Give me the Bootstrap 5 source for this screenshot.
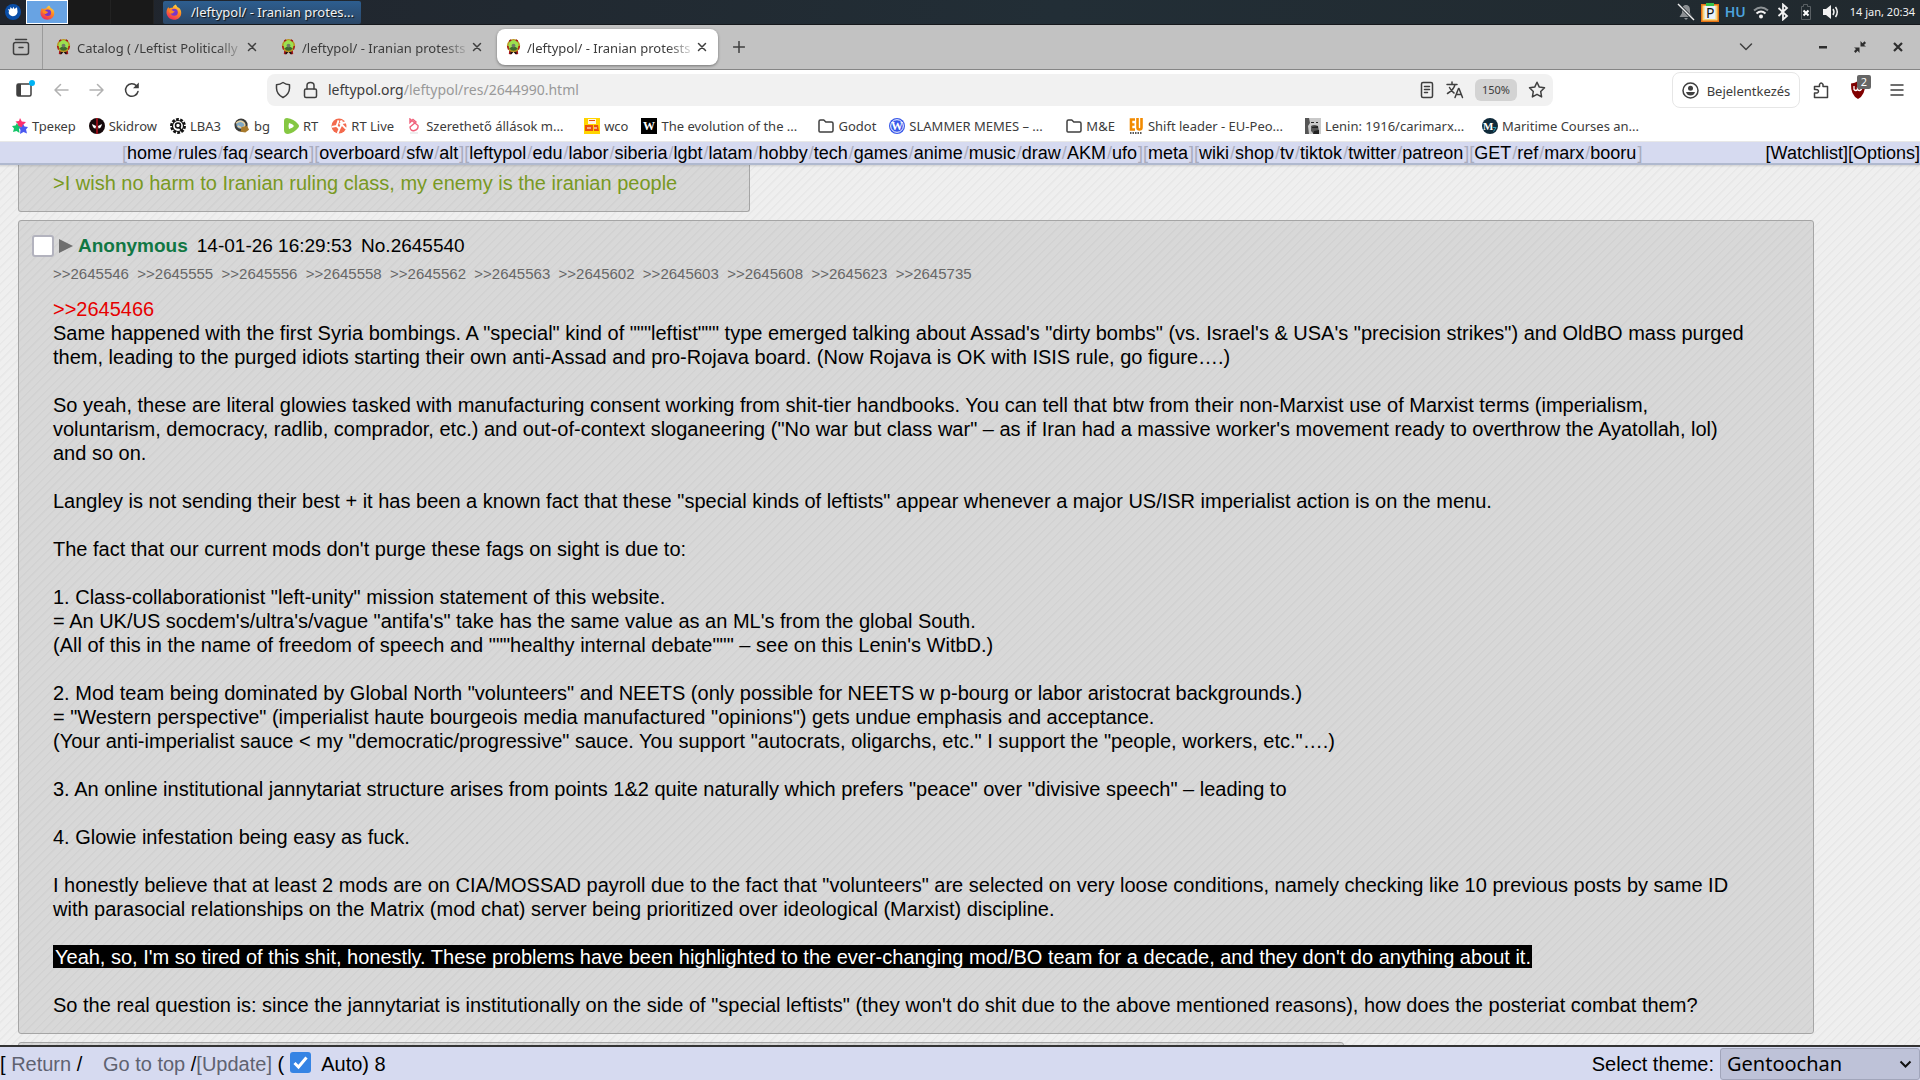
<!DOCTYPE html>
<html lang="hu">
<head>
<meta charset="utf-8">
<meta name="viewport" content="width=device-width, initial-scale=1">
<title>/leftypol/ - Iranian protests</title>
<link href="https://cdn.jsdelivr.net/npm/bootstrap@5.3.0/dist/css/bootstrap.min.css" rel="stylesheet">
<style>
  body { font-family: "Noto Sans", sans-serif; font-size: 13px; line-height: 20px; color: #3c3c3c; overflow: hidden; }
  a { color: inherit; text-decoration: none; }
  button { font: inherit; color: inherit; background: none; border: 0; padding: 0; }
  svg { display: block; flex: none; }
  .ln { fill: none; stroke: #3f3f3f; stroke-width: 1.5; stroke-linecap: round; stroke-linejoin: round; }

  /* desktop panel */
  .desk-panel { height: 25px; background: linear-gradient(90deg, #20242c, #222e36 55%, #21292e); border-bottom: 1px solid #15181c; color: #f2f2f2; padding-right: 5px; }
  .launcher { width: 26px; }
  .workspace { width: 43px; height: 24px; background: #191919; border-right: 1px solid #222; }
  .workspace-on { width: 42px; background: #68a3e3; border: 1px solid #fff; }
  .task-btn { width: 198px; height: 23px; margin-left: 9px; padding: 0 4px 0 3px; gap: 9px; background: linear-gradient(#2d5e90, #2b4767); border-radius: 2px; text-shadow: 1px 1px 1px #111; }
  .tray { gap: 6px; }
  .clock { font-size: 11px; margin-left: 4px; }
  .kbd { color: #4da3dc; font-size: 14px; font-weight: 600; }

  /* browser chrome */
  .tab-strip { height: 45px; background: #c2c2c2; border-bottom: 1px solid #858585; }
  .recent { width: 43px; height: 44px; border-right: 1px solid #9b9b9b; }
  .tab-item { width: 221px; height: 36px; margin: 0 2px; padding: 0 10px 0 9px; gap: 6px; border-radius: 8px; }
  .tab-first { margin-left: 4px; }
  .tab-on { background: #fff; box-shadow: 0 1px 3px #0006; }
  .tab-title { flex: 1; padding-top: 2px; overflow: hidden; white-space: nowrap; -webkit-mask-image: linear-gradient(90deg, #000 86%, #0003); mask-image: linear-gradient(90deg, #000 86%, #0003); }
  .new-tab { margin-left: 13px; }
  .tab-list { margin-right: 39px; }
  .win-btns { gap: 26px; padding-right: 16px; }
  .toolbar-row { height: 40px; padding: 0 16px 0 15px; }
  .addr { height: 32px; margin: 0 119px 0 126px; background: #f1f1f1; border-radius: 8px; padding: 0 6px 0 7px; font-size: 14px; }
  .addr-box { border: 0; background: none; padding: 0; outline: 0; color: #999; }
  .zoom-pill { width: 42px; height: 22px; border-radius: 6px; background: #d3d3d3; font-size: 11px; }
  .sign-in { width: 128px; height: 36px; border: 1px solid #e6e6e6; border-radius: 8px; gap: 8px; padding-top: 1px; }
  .ext-badge { position: absolute; left: 7px; top: -6px; width: 14px; height: 14px; border-radius: 2px; background: #666; color: #fff; font-size: 11px; line-height: 14px; text-align: center; }
  .marks { height: 32px; padding: 1px 12px 0; gap: 13px; border-bottom: 1px solid #e8e8e8; }
  .marks a { display: flex; align-items: center; gap: 4px; white-space: nowrap; }
  .marks .cut { width: 164px; }

  /* board */
  .board { font-family: "Liberation Sans", Arial, sans-serif; font-size: 20px; line-height: 24px; color: #000; }
  .board-nav { height: 23px; background: #d6daf0; border-bottom: 2px solid #b0b9cf; font-size: 18px; line-height: 22px; padding-left: 122px; box-shadow: 0 1px 2px #0002; z-index: 1; color: #a9acbd; white-space: nowrap; }
  .board-nav a { color: #000; }
  .board-list a { margin-right: 1px; }
  .thread { background: repeating-linear-gradient(-45deg, #efefef 0 4px, #e8e8e8 5px 6px); padding-left: 18px; }
  .reply { background: repeating-linear-gradient(-45deg, #d8d8d8 0 4px, #d2d2d2 5px 6px); border: 1px solid #a5a5a5; border-radius: 3px; margin-bottom: 8px; }
  .reply-prev { width: 732px; padding: 6px 34px 16px; border-top: 0; border-radius: 0 0 3px 3px; color: #789922; }
  .reply-main { margin-right: 106px; padding: 13px 62px 16px 34px; }
  .reply-next { width: 1326px; height: 40px; }
  .intro { margin-left: -21px; gap: 5px; font-size: 19px; }
  .intro label { gap: 9px; }
  .tick { appearance: none; width: 22px; height: 22px; margin: 0; background: #fff; border: 2px solid #b3b3be; border-radius: 3px; }
  .poster { color: #117743; font-weight: bold; }
  .backlinks { font-size: 15px; line-height: 20px; margin: 6px 0 13px; color: #666; }
  .quote-link { color: #e60000; }
  .shout { background: #000; color: #fff; padding: 1px 1px 0 2px; }
  .foot-bar { height: 35px; background: #d6daf0; border-top: 2px solid #333; z-index: 1; white-space: pre; }
  .foot-bar a { color: #5f6270; }
  .tick-on { background: #3584e4; border: 0; border-radius: 3px; }
  .auto-box { position: relative; width: 21px; height: 21px; margin: 0 10px 2px 6px; }
  .auto-box svg { position: absolute; left: 3px; top: 3px; pointer-events: none; }
  .auto-box input { width: 21px; height: 21px; display: block; }
  .theme-box { position: relative; width: 200px; margin-left: 6px; }
  .theme-box select { appearance: none; width: 100%; height: 32px; padding: 0 6px; background: #bec2d8; border: 1px solid #a1a5ba; border-radius: 3px; font-family: "Noto Sans", sans-serif; font-size: 20px; color: #000; }
  .theme-box svg { position: absolute; right: 8px; top: 12px; pointer-events: none; }
</style>
</head>
<body class="vh-100 d-flex flex-column bg-white">

<svg width="0" height="0" class="position-absolute" aria-hidden="true">
  <defs>
    <linearGradient id="fxg" x1=".8" y1="0" x2=".3" y2="1"><stop offset="0" stop-color="#ffe14a"/><stop offset=".45" stop-color="#ff8a1e"/><stop offset="1" stop-color="#ef2560"/></linearGradient>
  </defs>
  <symbol id="fx" viewBox="0 0 16 16">
    <path fill="url(#fxg)" d="M9.600 .4c1 1 1.500 1.800 1.700 2.700 1.300.4 2.600 1.600 3.200 2.600C16.800 10.600 13.500 15.800 8 15.800 3.500 15.800.3 12.200.5 8c.1-2 .8-3.800 2-5 .1.8.3 1.200.6 1.500 1-.9 2.200-1 3.300-.6C6.900 2.600 8 1.200 9.600.4z"/>
    <circle cx="8.300" cy="8.300" r="3.500" fill="#7a35c9"/>
    <path fill="#ff8a20" d="M3 6.500c1.600-1 3.200-.6 4.200.4 1 .2 1.400.5 1.400.8-.2.800-2 .9-2.100 1.800C4 10 2.700 8 3 6.500z"/>
  </symbol>
  <symbol id="wreath" viewBox="0 0 16 18">
    <path fill="#a3151b" d="M3.500 12h9l.5 4.500-2.500.5L8 14l-2.500 3L3 16.500z"/><path fill="#151515" d="M5.500 13h5l1 3.500H10l-2-2.500-2 2.500H4.500z"/>
    <circle cx="8" cy="7.500" r="7" fill="#b8961f"/>
    <path fill="#a3151b" d="M1 8h2v4H2zM15 8h-2v4h1zM5 .8l1.500 1.700L4 4 3 2zM11 .8L9.500 2.500 12 4l1-2z"/>
    <circle cx="8" cy="7.200" r="5.300" fill="#9be04f"/>
    <path fill="#3c6a2c" d="M3.500 10.500Q8 6.500 12.500 10.500 10.500 13 8 13t-4.500-2.500z"/><circle cx="8" cy="7.500" r="2" fill="#6e7b66"/>
  </symbol>
  <symbol id="x" viewBox="0 0 12 12"><path class="ln" d="M2.500 2.500l7 7M9.500 2.500l-7 7"/></symbol>
  <symbol id="folder" viewBox="0 0 16 16"><path class="ln" d="M1 13V3.500Q1 2 2.500 2h3.300l2 2H13.500Q15 4 15 5.500V12.500Q15 14 13.500 14H2Q1 14 1 13z"/></symbol>
</svg>

<header class="desk-panel d-flex align-items-center flex-shrink-0">
  <div class="launcher d-flex justify-content-center">
    <svg width="16" height="16" viewBox="0 0 16 16"><circle cx="8" cy="8" r="8" fill="#0a4ea8"/><path fill="#fff" d="M4 7l-1-2 2 .5L5.500 3l1.800 2L8.500 2.800l1 2.200L12 3.200l.6 4.800c-.6 3-2.600 4.200-5 4.200C5.500 12 4 10 3.600 9z"/></svg>
  </div>
  <div class="workspace workspace-on d-flex align-items-center justify-content-center"><svg width="15" height="15"><use href="#fx"/></svg></div>
  <div class="workspace"></div><div class="workspace"></div>
  <button class="task-btn d-flex align-items-center text-nowrap"><svg width="16" height="16"><use href="#fx"/></svg>/leftypol/ - Iranian protes...</button>
  <div class="tray d-flex align-items-center ms-auto">
    <svg width="18" height="18" viewBox="0 0 18 18"><path fill="#8b8f92" d="M9 2c3 0 4 2.500 4 5v3l2.500 4h-13L5 10V7c0-2.500 1-5 4-5zM7 15h4l-2 2z"/><path stroke="#21292e" stroke-width="3" d="M2 2l15 15"/><path stroke="#eee" stroke-width="1.500" d="M1 1l16 16"/></svg>
    <svg width="18" height="20" viewBox="0 0 18 20"><path fill="#e87513" d="M0 2h18v18H0z"/><path fill="#fad67a" d="M1.500 3.500h15v15h-15z"/><path fill="#e9f2fb" d="M3.500 4h11v13h-11z"/><path fill="#36c24a" d="M5 1h8v3H5z"/><text x="5" y="16" font-size="14" font-family="Noto Sans" fill="#111">P</text></svg>
    <span class="kbd p-0 bg-transparent">HU</span>
    <svg width="18" height="14" viewBox="0 0 16 14"><g fill="none" stroke="#8e9396" stroke-width="2"><path d="M1 5.500q7-6 14 0"/><path stroke="#f2f2f2" d="M3.500 8.500q4.500-4 9 0"/></g><circle cx="8" cy="11.500" r="2" fill="#f2f2f2"/></svg>
    <svg width="14" height="18" viewBox="0 0 14 18"><path fill="none" stroke="#f2f2f2" stroke-width="1.800" d="M2.500 5l8.500 8-4 3.500v-15L11 5l-8.500 8"/></svg>
    <svg width="20" height="18" viewBox="0 0 16 18"><path fill="none" stroke="#5a6064" d="M3.500 3.500h2v-2h4v2h3v13h-9z"/><path stroke="#fff" stroke-width="2" d="M5.500 7.500l5 5M10.500 7.500l-5 5"/></svg>
    <svg width="18" height="16" viewBox="0 0 18 16"><path fill="#f2f2f2" d="M1 5h3l5-4v14l-5-4H1z"/><path fill="none" stroke="#f2f2f2" stroke-width="1.500" d="M11 5q2 3 0 6M13.500 3q3.500 5 0 10"/></svg>
    <span class="clock">14 jan, 20:34</span>
  </div>
</header>

<div class="tab-strip d-flex align-items-center flex-shrink-0">
  <button class="recent d-flex align-items-center justify-content-center" aria-label="Recent"><svg width="18" height="18" viewBox="0 0 18 18"><path class="ln" d="M3.500 1.500h11M1.500 6.500Q1.500 4.500 3.500 4.500h11q2 0 2 2v8q0 2-2 2h-11q-2 0-2-2zM7 9.500h4"/></svg></button>
  <div class="tab-item tab-first d-flex align-items-center"><svg width="15" height="18"><use href="#wreath"/></svg><span class="tab-title">Catalog ( /Leftist Politically</span><button aria-label="Close"><svg width="12" height="12"><use href="#x"/></svg></button></div>
  <div class="tab-item d-flex align-items-center"><svg width="15" height="18"><use href="#wreath"/></svg><span class="tab-title">/leftypol/ - Iranian protests</span><button aria-label="Close"><svg width="12" height="12"><use href="#x"/></svg></button></div>
  <div class="tab-item tab-on d-flex align-items-center"><svg width="15" height="18"><use href="#wreath"/></svg><span class="tab-title">/leftypol/ - Iranian protests</span><button aria-label="Close"><svg width="12" height="12"><use href="#x"/></svg></button></div>
  <button class="new-tab" aria-label="New tab"><svg width="12" height="12" viewBox="0 0 12 12"><path class="ln" d="M6 .5v11M.5 6h11"/></svg></button>
  <div class="win-btns d-flex align-items-center ms-auto">
    <button class="tab-list" aria-label="List tabs"><svg width="14" height="10" viewBox="0 0 14 10"><path class="ln" d="M1.500 2L7 7.500 12.500 2"/></svg></button>
    <button aria-label="Minimize"><svg width="10" height="10" viewBox="0 0 10 10"><path fill="#2e2e2e" d="M1 4h8v2.500H1z"/></svg></button>
    <button aria-label="Restore"><svg width="12" height="12" viewBox="0 0 12 12"><path fill="#2e2e2e" d="M6.500 0v5.500H12L10 4l2-2L10.500.3 8.500 2.200zM5.500 12V6.500H0L2 8 0 10.200 1.600 12l2-2.200z"/></svg></button>
    <button aria-label="Close window"><svg width="12" height="12" viewBox="0 0 12 12"><path stroke="#2e2e2e" stroke-width="2.200" d="M2 2l8 8M10 2l-8 8"/></svg></button>
  </div>
</div>

<div class="toolbar-row d-flex align-items-center flex-shrink-0">
  <div class="d-flex align-items-center gap-3">
    <button aria-label="Sidebar"><svg width="20" height="20" viewBox="0 0 20 20"><rect class="ln" x="2" y="4" width="14" height="12" rx="1.500"/><path fill="#3f3f3f" d="M2 4h4v12H2z"/><circle cx="17" cy="3" r="3" fill="#00b3f4"/></svg></button>
    <button aria-label="Back"><svg width="20" height="16" viewBox="0 0 20 16" opacity=".4"><path class="ln" d="M17 8H4M9.500 2.500L4 8l5.500 5.500"/></svg></button>
    <button aria-label="Forward"><svg width="20" height="16" viewBox="0 0 20 16" opacity=".4"><path class="ln" d="M3 8h13M10.500 2.500L16 8l-5.500 5.500"/></svg></button>
    <button aria-label="Reload"><svg width="18" height="18" viewBox="0 0 18 18"><path class="ln" d="M15 10.500A6.300 6.300 0 1 1 13.500 4.700"/><path fill="#3f3f3f" d="M15.800 1.500v5.800H10z"/></svg></button>
  </div>
  <div class="addr d-flex align-items-center flex-grow-1">
    <svg width="18" height="18" viewBox="0 0 18 18"><path class="ln" d="M9 1.500q3 2 6.500 2.300v3.500Q15.300 13.500 9 16.500 2.700 13.500 2.500 7.300V3.800Q6 3.500 9 1.500z"/></svg>
    <svg class="ms-2 me-2" width="20" height="18" viewBox="0 0 18 18"><rect class="ln" x="3.500" y="8" width="12" height="8.500" rx="1.500"/><path class="ln" d="M6 8V4.500a3.500 3 0 0 1 7 0V8"/></svg>
    <label for="url">leftypol.org</label><input id="url" class="addr-box flex-grow-1" type="text" value="/leftypol/res/2644990.html">
    <svg width="16" height="18" viewBox="0 0 16 18"><rect class="ln" x="2.500" y="1.500" width="11" height="15" rx="1.500"/><path class="ln" d="M5.500 5.500h5M5.500 8.500h5M5.500 11.500h3"/></svg>
    <svg class="ms-2 me-2" width="24" height="20" viewBox="0 0 24 20"><path class="ln" d="M4 4.500h10M9 2v2.500M12 4.500q-1 5-7.500 9M6.500 7.500q2 4 4.500 5.500M12 17.500l3.500-9h.5l3.500 9M13.500 14.500H18"/></svg>
    <button class="zoom-pill">150%</button>
    <svg class="ms-2" width="22" height="20" viewBox="0 0 22 20"><path class="ln" d="M12 2.200l2.300 4.900 5.200.7-3.800 3.700.9 5.400-4.600-2.600-4.600 2.600.9-5.400-3.800-3.700 5.200-.7z"/></svg>
  </div>
  <div class="d-flex align-items-center flex-shrink-0">
    <button class="sign-in d-flex align-items-center justify-content-center"><svg width="17" height="17" viewBox="0 0 17 17"><circle class="ln" cx="8.500" cy="8.500" r="7.500"/><circle cx="8.500" cy="6.300" r="2.500" fill="#3f3f3f"/><path fill="#3f3f3f" d="M4 10h9q-1 3.500-4.500 3.500T4 10z"/></svg>Bejelentkezés</button>
    <button class="ms-2 ps-1" aria-label="Extensions"><svg width="18" height="18" viewBox="0 0 18 18"><path class="ln" d="M2.500 16.500v-4.500q4 .5 4-1.700T2.500 8.500V5.500H7.500V3.500q1.500-3 3.500 0v2h4.500v11z"/></svg></button>
    <button class="position-relative ms-3 ps-1" aria-label="uBlock"><svg width="16" height="18" viewBox="0 0 16 18"><path fill="#800000" d="M8 0q3 2 7 2.500Q15.500 14 8 18 .5 14 1 2.500 5 2 8 0z"/><path fill="none" stroke="#fff" stroke-width="1.300" d="M4 5v3.500q1.800 2 3.500 0V6M7.500 8.500q2 2 3.700 0T9 6"/></svg><span class="ext-badge ms-1">2</span></button>
    <button class="ms-3 ps-2" aria-label="Menu"><svg width="14" height="14" viewBox="0 0 14 14"><path class="ln" d="M1 2h12M1 7h12M1 12h12"/></svg></button>
  </div>
</div>

<nav class="marks d-flex align-items-center flex-shrink-0">
  <a href="#"><svg width="16" height="16" viewBox="0 0 16 16"><path fill="#ff2f6d" d="M8 0l1.800 3.500L14 4l-3 3 .5 3L8 9 4.500 9 6 6 3.500 3.500 7 3z"/><path fill="#14c468" d="M5 5l1.500 3L9 9 7 11l.5 4L4.500 13 1 14l1-3.500L0 8l3.500-.5z"/><path fill="#4a58f0" d="M11 6l1.500 2.500L16 9l-2 2.500 1 4-3.500-1.500L8 16l.5-4L7 9.500l3-.5z"/></svg>Трекер</a>
  <a href="#"><svg width="16" height="16" viewBox="0 0 16 16"><circle cx="8" cy="8" r="8" fill="#16090b"/><path stroke="#b80f1d" stroke-width="1.500" d="M8 0v16"/><path fill="#fff" d="M3 6l4 2-.5 2.500Q4 10.500 3 6zM13 6L9 8l.5 2.500Q12 10.500 13 6z"/></svg>Skidrow</a>
  <a href="#"><svg width="16" height="16" viewBox="0 0 16 16"><circle cx="8" cy="8" r="6.700" fill="none" stroke="#111" stroke-width="2.500" stroke-dasharray="2.800 1.400"/><circle cx="8" cy="8" r="5.500" fill="none" stroke="#111" stroke-width="1.200"/><circle cx="8" cy="7.500" r="2.500" fill="none" stroke="#111" stroke-width="1.500"/><path stroke="#111" stroke-width="1.500" d="M9 9l3 4"/></svg>LBA3</a>
  <a href="#"><svg width="16" height="16" viewBox="0 0 17 16"><circle cx="7.500" cy="7" r="7" fill="#3b3a37"/><circle cx="7" cy="6.500" r="4.500" fill="#7fa8c6"/><path fill="none" stroke="#e6cf9e" stroke-width="1.500" d="M2 5q5-4 9 0 2 4-3 5L4 8"/><path fill="#a87a2c" d="M8 9l6-1 2 4-4 3-5-1z"/></svg>bg</a>
  <a href="#"><svg width="16" height="16" viewBox="0 0 16 16"><path fill="#85c742" d="M1 3q0-3 3-3 7 1 11 6 2 2 0 4-4 5-10 6Q1 16 1 12z"/><path fill="#fff" d="M6 5q4 1 5 3-1 2-5 3-1-3 0-6z"/></svg>RT</a>
  <a href="#"><svg width="16" height="16" viewBox="0 0 17 16"><circle cx="8.500" cy="8" r="8" fill="#f36a4d"/><path fill="none" stroke="#fff" stroke-width="2" d="M1 9l5-1 2-6M6 8l3 3-2 5M9 11l3-6 4-1M9 5l3 2 4 4"/><circle cx="11" cy="3.500" r="1.500" fill="#fff"/></svg>RT Live</a>
  <a href="#" class="cut"><svg width="15" height="16" viewBox="0 0 15 16"><path fill="none" stroke="#f0607a" stroke-width="1.400" d="M3 1l8 6.500q.5 4-3.500 5T3 9L9 4 6 1.500 3 4.500z"/><path stroke="#ddd" d="M3 15h8"/></svg>Szerethető állások m...</a>
  <a href="#"><svg width="16" height="16" viewBox="0 0 16 16"><path fill="#ffd400" d="M0 0h16v16H0z"/><path fill="#fff4e8" d="M4 1h8v5H4z"/><path fill="#e9500e" d="M1 7h8v6H1zM10 7h4l1 6h-5zM5 2h6v1H5z"/><path stroke="#fff" d="M3 10h4M10 10h3"/></svg>wco</a>
  <a href="#" class="cut"><svg width="16" height="16" viewBox="0 0 16 16"><path d="M0 0h16v16H0z"/><text x="2" y="12" font-family="Liberation Serif" font-weight="bold" font-size="12" fill="#fff">W</text></svg>The evolution of the ...</a>
  <a href="#"><svg width="16" height="16"><use href="#folder"/></svg>Godot</a>
  <a href="#" class="cut"><svg width="16" height="16" viewBox="0 0 16 16"><circle cx="8" cy="8" r="8" fill="#3858e9"/><circle cx="8" cy="8" r="6.300" fill="none" stroke="#fff"/><text x="2" y="12" font-family="Liberation Serif" font-weight="bold" font-size="12" fill="#fff">W</text></svg>SLAMMER MEMES – ...</a>
  <a href="#"><svg width="16" height="16"><use href="#folder"/></svg>M&amp;E</a>
  <a href="#" class="cut"><svg width="16" height="16" viewBox="0 0 16 16"><path fill="none" stroke="#f28a00" stroke-width="2.600" d="M7 1.500H3v10h4M3 6.500h3.500M9.500 0v9.500q0 2 2 2t2-2V0"/><path stroke="#222" stroke-width="1.500" stroke-dasharray="1.500 1" d="M2 15h12"/></svg>Shift leader - EU-Peo...</a>
  <a href="#" class="cut"><svg width="16" height="16" viewBox="0 0 16 16"><path fill="#c9c9c9" d="M0 0h16v16H0z"/><path fill="#555" d="M0 0h4l1 5-2 3 1 8H0zM6 8q3-2 7 0l1 5-5 3-3-3z"/><path fill="#222" d="M7 9l6-1v2H7zM6 4h3v1H6zM11 4h2v1h-2zM9 13l5-1v4H8z"/></svg>Lenin: 1916/carimarx...</a>
  <a href="#" class="cut"><svg width="16" height="16" viewBox="0 0 16 16"><circle cx="8" cy="8" r="8" fill="#0f2a3a"/><text x="1" y="12" font-family="Liberation Serif" font-weight="bold" font-size="11" fill="#fff">M</text><path fill="none" stroke="#2d9bb5" d="M10.500 9.500H14l-2.500 4"/></svg>Maritime Courses an...</a>
</nav>

<main class="board d-flex flex-column flex-grow-1 overflow-hidden">
  <nav class="board-nav d-flex justify-content-between flex-shrink-0">
    <div class="board-list">[<a href="#">home</a>/<a href="#">rules</a>/<a href="#">faq</a>/<a href="#">search</a>][<a href="#">overboard</a>/<a href="#">sfw</a>/<a href="#">alt</a>][<a href="#">leftypol</a>/<a href="#">edu</a>/<a href="#">labor</a>/<a href="#">siberia</a>/<a href="#">lgbt</a>/<a href="#">latam</a>/<a href="#">hobby</a>/<a href="#">tech</a>/<a href="#">games</a>/<a href="#">anime</a>/<a href="#">music</a>/<a href="#">draw</a>/<a href="#">AKM</a>/<a href="#">ufo</a>][<a href="#">meta</a>][<a href="#">wiki</a>/<a href="#">shop</a>/<a href="#">tv</a>/<a href="#">tiktok</a>/<a href="#">twitter</a>/<a href="#">patreon</a>][<a href="#">GET</a>/<a href="#">ref</a>/<a href="#">marx</a>/<a href="#">booru</a>]</div>
    <div><a href="#">[Watchlist]</a><a href="#">[Options]</a></div>
  </nav>

  <section class="thread flex-grow-1 overflow-hidden">
    <article class="reply reply-prev">&gt;I wish no harm to Iranian ruling class, my enemy is the iranian people</article>
    <article class="reply reply-main">
      <div class="intro d-flex align-items-center">
        <input class="tick" type="checkbox" id="p2645540" aria-label="Select post 2645540">
        <svg width="14" height="14" viewBox="0 0 14 14"><path fill="#6f6f6f" d="M0 0l14 7-14 7z"/></svg>
        <label class="d-flex" for="p2645540"><span class="poster">Anonymous</span><span>14-01-26 16:29:53</span><span>No.2645540</span></label>
      </div>
      <div class="backlinks"><a href="#">&gt;&gt;2645546</a>&nbsp; <a href="#">&gt;&gt;2645555</a>&nbsp; <a href="#">&gt;&gt;2645556</a>&nbsp; <a href="#">&gt;&gt;2645558</a>&nbsp; <a href="#">&gt;&gt;2645562</a>&nbsp; <a href="#">&gt;&gt;2645563</a>&nbsp; <a href="#">&gt;&gt;2645602</a>&nbsp; <a href="#">&gt;&gt;2645603</a>&nbsp; <a href="#">&gt;&gt;2645608</a>&nbsp; <a href="#">&gt;&gt;2645623</a>&nbsp; <a href="#">&gt;&gt;2645735</a></div>
      <div>
        <a class="quote-link" href="#">&gt;&gt;2645466</a><br>
        Same happened with the first Syria bombings. A "special" kind of """leftist""" type emerged talking about Assad's "dirty bombs" (vs. Israel's &amp; USA's "precision strikes") and OldBO mass purged them, leading to the purged idiots starting their own anti-Assad and pro-Rojava board. (Now Rojava is OK with ISIS rule, go figure….)<br><br>
        So yeah, these are literal glowies tasked with manufacturing consent working from shit-tier handbooks. You can tell that btw from their non-Marxist use of Marxist terms (imperialism, voluntarism, democracy, radlib, comprador, etc.) and out-of-context sloganeering ("No war but class war" – as if Iran had a massive worker's movement ready to overthrow the Ayatollah, lol) and so on.<br><br>
        Langley is not sending their best + it has been a known fact that these "special kinds of leftists" appear whenever a major US/ISR imperialist action is on the menu.<br><br>
        The fact that our current mods don't purge these fags on sight is due to:<br><br>
        1. Class-collaborationist "left-unity" mission statement of this website.<br>
        = An UK/US socdem's/ultra's/vague "antifa's" take has the same value as an ML's from the global South.<br>
        (All of this in the name of freedom of speech and """healthy internal debate""" – see on this Lenin's WitbD.)<br><br>
        2. Mod team being dominated by Global North "volunteers" and NEETS (only possible for NEETS w p-bourg or labor aristocrat backgrounds.)<br>
        = "Western perspective" (imperialist haute bourgeois media manufactured "opinions") gets undue emphasis and acceptance.<br>
        (Your anti-imperialist sauce &lt; my "democratic/progressive" sauce. You support "autocrats, oligarchs, etc." I support the "people, workers, etc."….)<br><br>
        3. An online institutional jannytariat structure arises from points 1&amp;2 quite naturally which prefers "peace" over "divisive speech" – leading to<br><br>
        4. Glowie infestation being easy as fuck.<br><br>
        I honestly believe that at least 2 mods are on CIA/MOSSAD payroll due to the fact that "volunteers" are selected on very loose conditions, namely checking like 10 previous posts by same ID with parasocial relationships on the Matrix (mod chat) server being prioritized over ideological (Marxist) discipline.<br><br>
        <span class="shout">Yeah, so, I'm so tired of this shit, honestly. These problems have been highlighted to the ever-changing mod/BO team for a decade, and they don't do anything about it.</span><br><br>
        So the real question is: since the jannytariat is institutionally on the side of "special leftists" (they won't do shit due to the above mentioned reasons), how does the posteriat combat them?
      </div>
    </article>
    <article class="reply reply-next"></article>
  </section>

  <footer class="foot-bar d-flex align-items-center flex-shrink-0"><span>[ <a href="#">Return</a> /   <a class="ms-1" href="#">Go to top</a> /<a href="#">[Update]</a> (</span><span class="auto-box"><input class="tick tick-on" type="checkbox" id="auto" checked><svg width="15" height="15" viewBox="0 0 15 15"><path fill="none" stroke="#fff" stroke-width="3" d="M1.500 8l4 4L13.500 2.500"/></svg></span><label for="auto">Auto) 8</label><label class="ms-auto" for="theme">Select theme:</label><span class="theme-box"><select id="theme"><option>Gentoochan</option></select><svg width="13" height="9" viewBox="0 0 13 9"><path fill="none" stroke="#111" stroke-width="2" d="M1.500 1.500l5 5 5-5"/></svg></span></footer>
</main>
<script src="https://cdn.jsdelivr.net/npm/bootstrap@5.3.0/dist/js/bootstrap.bundle.min.js"></script>
</body>
</html>
